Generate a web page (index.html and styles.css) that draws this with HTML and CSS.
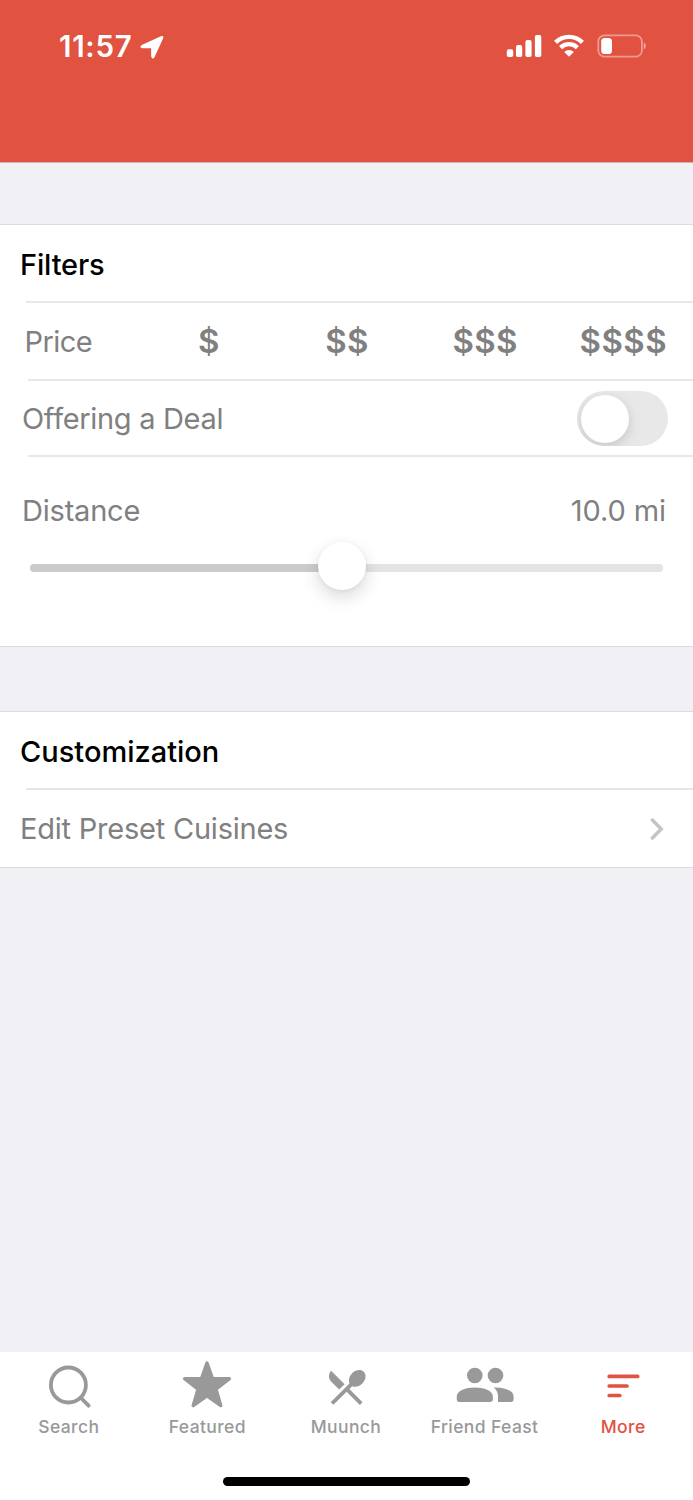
FILE: index.html
```html
<!DOCTYPE html>
<html lang="en">
<head>
<meta charset="utf-8">
<title>More</title>
<link rel="stylesheet" href="styles.css">
</head>
<body>
<div class="screen">
  <header class="header">
    <div class="clock">
      <span class="time">11:57</span>
      <svg class="location" width="24" height="24" viewBox="0 0 24 24"><path d="M2 10.8 21.2 2Q23.2 1.2 22.4 3.2L13.9 21.8Q12.6 24 11.9 21.4V13.4Q11.8 12.5 11 12.5L2.3 12.4Q.2 12 2 10.8Z" fill="currentColor" stroke="currentColor" stroke-width="1.5" stroke-linejoin="round"/></svg>
    </div>
    <div class="indicators">
      <svg width="36" height="24" viewBox="0 0 36 24" fill="currentColor"><rect x=".8" y="15.3" width="6.4" height="7.7" rx="1.8"/><rect x="10" y="11.1" width="6.2" height="11.9" rx="1.8"/><rect x="19.4" y="6.1" width="6.2" height="16.9" rx="1.8"/><rect x="28.9" y="1.1" width="6.4" height="21.9" rx="1.8"/></svg>
      <svg class="wifi" width="30" height="24" viewBox="0 0 30 24" fill="none" stroke="currentColor" stroke-width="4.4"><path d="M1.6 8.4A19 19 0 0 1 28.4 8.4"/><path d="M6.6 13.6A11.8 11.8 0 0 1 23.4 13.6"/><path d="M10.2 18.1A6.8 6.8 0 0 1 19.8 18.1L15 22.8Z" fill="currentColor" stroke="none"/></svg>
      <svg class="battery" width="50" height="24" viewBox="0 0 50 24"><rect x="1.3" y="1.3" width="43.6" height="21.4" rx="6.3" fill="none" stroke="#fff" stroke-opacity=".42" stroke-width="1.8"/><rect x="4.2" y="4" width="10.8" height="16" rx="3.6" fill="#fff"/><path d="M46.8 8.5Q48.8 9.4 48.8 12T46.8 15.5Z" fill="#fff" fill-opacity=".5"/></svg>
    </div>
  </header>

  <main class="content">
    <section class="group filters">
      <h2 class="row title"><span class="filters-title">Filters</span></h2>
      <div class="row price">
        <span class="label price-label">Price</span>
        <div class="price-options"><span>$</span><span>$$</span><span>$$$</span><span>$$$$</span></div>
      </div>
      <div class="row deal">
        <span class="label deal-label">Offering a Deal</span>
        <span class="switch"><span class="switch-knob"></span></span>
      </div>
      <div class="distance">
        <div class="distance-head"><span class="label distance-label">Distance</span><span class="label distance-value">10.0 mi</span></div>
        <div class="slider"><div class="slider-fill"></div><div class="slider-knob"></div></div>
      </div>
    </section>

    <section class="group custom">
      <h2 class="row title"><span class="custom-title">Customization</span></h2>
      <div class="row edit">
        <span class="label edit-label">Edit Preset Cuisines</span>
        <svg width="14" height="24" viewBox="0 0 14 24"><path d="M2.4 3 11.2 12 2.4 21" fill="none" stroke="#c4c4c4" stroke-width="3.5" stroke-linecap="round" stroke-linejoin="miter"/></svg>
      </div>
    </section>
  </main>

  <nav class="tabs">
    <div class="tab-list">
      <div class="tab"><svg width="48" height="52" viewBox="0 2 48 52" fill="none" stroke="currentColor" stroke-width="3.8" stroke-linecap="round"><circle cx="23.4" cy="27" r="17.5"/><path d="M36.5 40.5 43.6 47.7"/></svg><span>Search</span></div>
      <div class="tab"><svg width="50" height="52" viewBox="0 1.8 50 52"><path d="M25 4.8 30.6 20.5H47.4L34 30.9 38.8 47.4 25 37.7 11.2 47.4 16 30.9 2.6 20.5H19.4Z" fill="currentColor" stroke="currentColor" stroke-width="3.4" stroke-linejoin="round"/></svg><span>Featured</span></div>
      <div class="tab"><svg width="44" height="52" viewBox="0 0 44 52"><g transform="translate(-.4 4) scale(1.92)" fill="currentColor"><path d="m8.1 13.34 2.83-2.83L3.91 3.5a4.008 4.008 0 0 0 0 5.66l4.19 4.18zm6.78-1.81c1.53.71 3.68.21 5.27-1.38 1.91-1.91 2.28-4.65.81-6.12-1.46-1.46-4.2-1.1-6.12.81-1.59 1.59-2.09 3.74-1.38 5.27L3.7 19.87l1.41 1.41L12 14.41l6.88 6.88 1.41-1.41L13.41 13l1.47-1.47z"/></g></svg><span>Muunch</span></div>
      <div class="tab"><svg width="60" height="52" viewBox=".2 8 60 52" fill="currentColor"><circle cx="20" cy="23.5" r="7.8"/><circle cx="40.7" cy="23.5" r="7.8"/><path d="M2 44.2C2 38.5 11 35.4 20 35.4S38 38.5 38 44.2V47.3Q38 50 35.3 50H4.7Q2 50 2 47.3Z"/><path d="M38.9 35.6C50 35 58.8 39 58.8 44.2V47.3Q58.8 50 56.1 50H43.2V44.5C43.2 40.8 41.6 37.7 38.9 35.6Z"/></svg><span>Friend Feast</span></div>
      <div class="tab more"><svg width="36" height="52" viewBox="0 8 36 52" fill="none" stroke="currentColor" stroke-width="3.7" stroke-linecap="round"><path d="M4.2 24.4H32.7M4.2 34H22M4.2 43.5H14.8"/></svg><span>More</span></div>
    </div>
    <div class="home-indicator"></div>
  </nav>
</div>
</body>
</html>
```
FILE: styles.css
```css
* { box-sizing: border-box; }
body { margin: 0; font-family: Inter, "Liberation Sans", sans-serif; color: #000; }
svg { display: block; flex: none; }
.screen { width: 693px; height: 1500px; display: flex; flex-direction: column; background: #f0f0f5; overflow: hidden; }

.header { height: 163px; padding: 34px 46px 0 59px; display: flex; align-items: flex-start; justify-content: space-between; background: #e15241; color: #fff; border-bottom: 1px solid #cbb5b5; }
.clock { display: flex; align-items: center; gap: 7.6px; height: 25px; }
.time { font-size: 29.5px; font-weight: 600; letter-spacing: .7px; line-height: 25px; }
.indicators { display: flex; align-items: center; height: 24px; }
.wifi { margin-left: 12px; }
.battery { margin-left: 13px; }

.content { flex: 1; padding-top: 61px; }
.group { background: #fff; border-top: 1px solid #dcdce0; border-bottom: 1px solid #dcdce0; }
.row { display: flex; align-items: center; justify-content: space-between; margin: 0; white-space: nowrap; }
.title { height: 76px; padding: 3px 0 0 20px; font-size: 29px; font-weight: 500; }
.filters-title { letter-spacing: -.15px; }
.label { color: #808080; font-size: 29px; line-height: 36px; white-space: nowrap; }

.filters { height: 423px; }
.price { height: 78px; margin-left: 26px; border-top: 2px solid #e8e8e8; }
.price-label { margin-left: -1.4px; padding-top: 2px; letter-spacing: -.6px; }
.price-options { width: 495px; display: grid; grid-template-columns: repeat(4, 127.2px); font-size: 33px; font-weight: 600; letter-spacing: .4px; color: #808080; line-height: 38px; }
.deal { height: 76px; margin-left: 28px; border-top: 2px solid #e8e8e8; padding-right: 25px; }
.deal-label { margin-left: -6px; padding-top: 1px; letter-spacing: -.32px; }
.distance-label { margin-left: -6px; letter-spacing: -.2px; }
.distance-value { letter-spacing: -.1px; }
.switch { width: 91px; height: 55px; padding: 4px; border-radius: 28px; background: #e8e8e8; overflow: hidden; }
.switch-knob { display: block; width: 48px; height: 48px; border-radius: 50%; background: #fff; box-shadow: 0 4px 12px rgba(0,0,0,.15); }
.distance { margin-left: 28px; border-top: 2px solid #e8e8e8; padding: 36px 27px 0 0; }
.distance-head { display: flex; justify-content: space-between; }
.slider { position: relative; height: 8px; margin: 35px 3px 0 2px; border-radius: 4px; background: #e4e4e6; }
.slider-fill { width: 312px; height: 8px; border-radius: 4px; background: #cbcbcb; }
.slider-knob { position: absolute; left: 288px; top: -22px; width: 48px; height: 48px; border-radius: 50%; background: #fff; box-shadow: 0 7px 18px rgba(0,0,0,.15), 0 1px 4px rgba(0,0,0,.06); }

.custom { margin-top: 64px; height: 157px; }
.edit { height: 79px; margin-left: 26px; border-top: 2px solid #e6e6e9; padding-right: 29px; }
.edit-label { margin-left: -6px; letter-spacing: -.22px; }

.tabs { height: 148px; background: #fff; display: flex; flex-direction: column; align-items: center; justify-content: space-between; padding-bottom: 14px; }
.tab-list { width: 100%; display: flex; color: #999; }
.tab { flex: 1 1 0; min-width: 0; display: flex; flex-direction: column; align-items: center; padding: 8px 1px 0 0; font-size: 17.5px; font-weight: 500; letter-spacing: .4px; line-height: 29px; white-space: nowrap; }
.more { color: #e15241; }
.home-indicator { width: 247px; height: 9px; border-radius: 5px; background: #000; }
```
